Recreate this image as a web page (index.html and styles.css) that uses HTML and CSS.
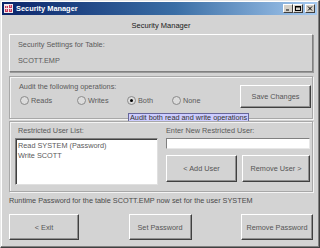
FILE: index.html
```html
<!DOCTYPE html>
<html>
<head>
<meta charset="utf-8">
<link rel="stylesheet" href="styles.css">
</head>
<body>
<div class="window">
  <div class="titlebar">
    <div class="appicon"><svg width="9" height="9" viewBox="0 0 9 9"><rect x="0" y="0" width="9" height="9" fill="#f4e8ee"/><path d="M1 2h3v2H1zM5 1h3v3H5zM1 5h3v3H1zM5 5h3v3H5z" fill="#c8385a"/><path d="M2 3h1M6 2h1M2 6h1M6 6h1" stroke="#fff" stroke-width="1"/></svg></div>
    <span class="title">Security Manager</span>
    <div class="winbtns">
      <span class="wb"><svg width="8" height="7" viewBox="0 0 8 7"><path d="M2 5h3" stroke="#000"/></svg></span>
      <span class="wb"><svg width="8" height="7" viewBox="0 0 8 7"><rect x="1.5" y="1.5" width="5" height="4" fill="none" stroke="#000"/><path d="M1.5 2h5" stroke="#000"/></svg></span>
      <span class="wb close"><svg width="8" height="7" viewBox="0 0 8 7"><path d="M2 1.5l4 4M6 1.5l-4 4" stroke="#000"/></svg></span>
    </div>
  </div>
  <div class="main">
    <div class="heading">Security Manager</div>
    <div class="panel raised p1">
      <div class="lbl">Security Settings for Table:</div>
      <div class="lbl tbl">SCOTT.EMP</div>
    </div>
    <div class="panel etched p2">
      <div class="audit">
        <div class="lbl">Audit the following operations:</div>
        <div class="radios">
          <span class="radio w1"><span class="circle"></span>Reads</span>
          <span class="radio w2"><span class="circle"></span>Writes</span>
          <span class="radio w3"><span class="circle on"></span>Both</span>
          <span class="radio"><span class="circle"></span>None</span>
        </div>
      </div>
      <div class="btn save">Save Changes</div>
      <div class="tooltip">Audit both read and write operations</div>
    </div>
    <div class="panel etched p3">
      <div class="col">
        <div class="lbl sub">Restricted User List:</div>
        <div class="list">
          <div>Read SYSTEM (Password)</div>
          <div>Write SCOTT</div>
        </div>
      </div>
      <div class="col">
        <div class="lbl">Enter New Restricted User:</div>
        <div class="field"></div>
        <div class="btnrow">
          <div class="btn ub">&lt; Add User</div>
          <div class="btn ub">Remove User &gt;</div>
        </div>
      </div>
    </div>
    <div class="status">Runtime Password for the table SCOTT.EMP now set for the user SYSTEM</div>
    <div class="bottom">
      <div class="btn b1">&lt; Exit</div>
      <div class="btn b2">Set Password</div>
      <div class="btn b3">Remove Password</div>
    </div>
  </div>
</div>
</body>
</html>
```

FILE: styles.css
```css
html, body { margin: 0; padding: 0; }
body { width: 320px; height: 248px; overflow: hidden; background: #d3d3d3; font-family: "Liberation Sans", Arial, sans-serif; }
.window {
  width: 320px; height: 248px; box-sizing: border-box;
  background: #d3d3d3;
  border-top: 1px solid #e8e8e8; border-left: 1px solid #e8e8e8;
  border-right: 1px solid #404040; border-bottom: 1px solid #404040;
  box-shadow: inset -1px -1px 0 #808080, inset 1px 1px 0 #fff;
  padding: 1px 2px 0 1px;
  display: flex; flex-direction: column;
}
.titlebar {
  height: 13px; display: flex; align-items: center;
  background: linear-gradient(to right, #0a246a 0%, #3a6ea5 55%, #a6caf0 100%);
  padding: 0 2px 0 2px;
}
.appicon { width: 9px; height: 9px; display: flex; }
.title { color: #fff; font-weight: bold; font-size: 7.4px; margin-left: 3px; flex: 1; }
.winbtns { display: flex; gap: 0; }
.wb {
  width: 8px; height: 7px; background: #d4d0c8; display: flex;
  border-top: 1px solid #fff; border-left: 1px solid #fff;
  border-right: 1px solid #404040; border-bottom: 1px solid #404040;
}
.wb.close { margin-left: 2px; }
.main { padding: 0 4px 0 7px; display: flex; flex-direction: column; flex: 1; }
.heading { height: 19px; text-align: center; font-size: 7.5px; color: #202020; line-height: 8px; padding-top: 7px; box-sizing: border-box; }
.lbl { font-size: 7.3px; color: #5a5a5a; line-height: 9px; }
.panel { box-sizing: border-box; position: relative; }
.raised {
  border-top: 1px solid #fff; border-left: 1px solid #fff;
  border-right: 1px solid #808080; border-bottom: 1px solid #808080;
  box-shadow: 1px 1px 0 #9a9a9a;
}
.etched {
  border: 1px solid #a8a8a8;
  box-shadow: inset 1px 1px 0 #f4f4f4, 1px 1px 0 #f4f4f4;
}
.p1 { height: 38px; padding: 5px 0 0 8px; }
.p1 .tbl { margin-top: 7px; }
.p2 { height: 43px; margin-top: 4px; display: flex; padding: 5px 1px 0 9px; }
.audit { flex: 1; }
.radios { display: flex; margin-top: 5px; margin-left: 1px; }
.radio { display: flex; align-items: center; font-size: 7.3px; color: #5a5a5a; line-height: 9px; }
.w1 { width: 57px; }
.w2 { width: 50px; }
.w3 { width: 45px; }
.circle {
  width: 7px; height: 7px; border-radius: 50%; border: 1px solid #8a8a8a;
  background: #dcdcdc; margin-right: 2px; position: relative; box-sizing: content-box;
}
.circle.on::after { content: ""; position: absolute; left: 2px; top: 2px; width: 3px; height: 3px; border-radius: 50%; background: #000; }
.btn {
  box-sizing: border-box; display: flex; align-items: center; justify-content: center;
  font-size: 7.3px; color: #555; background: #d3d3d3;
  border-top: 1px solid #fff; border-left: 1px solid #fff;
  border-right: 1px solid #404040; border-bottom: 1px solid #404040;
  box-shadow: inset -1px -1px 0 #909090;
}
.save { width: 71px; height: 23px; margin-top: 3px; }
.tooltip {
  position: absolute; left: 118px; top: 36px;
  background: #ccccff; border: 1px solid #66669a; color: #333;
  font-size: 7.3px; line-height: 7px; padding: 0 1px; white-space: nowrap;
}
.p3 { height: 71px; margin-top: 2px; display: flex; gap: 8px; padding: 4px 2px 0 5px; }
.col { display: flex; flex-direction: column; }
.p3 .col:first-child { width: 143px; }
.p3 .col:last-child { flex: 1; }
.sub { padding-left: 3px; }
.list {
  margin-top: 3px; height: 47px; box-sizing: border-box; background: #fff;
  border-top: 1px solid #808080; border-left: 1px solid #808080;
  border-right: 1px solid #e0e0e0; border-bottom: 1px solid #e0e0e0;
  box-shadow: inset 1px 1px 0 #404040;
  padding: 2px 0 0 2px; font-size: 7.3px; color: #5a5a5a; line-height: 10px;
}
.field {
  margin-top: 3px; height: 11px; box-sizing: border-box; background: #fff;
  border-top: 1px solid #808080; border-left: 1px solid #808080;
  border-right: 1px solid #e8e8e8; border-bottom: 1px solid #e8e8e8;
}
.btnrow { display: flex; justify-content: space-between; margin-top: 6px; }
.ub { width: 71px; height: 27px; }
.ub:last-child { width: 68px; }
.status { height: 22px; font-size: 7.3px; color: #4a4a4a; line-height: 9px; padding-top: 4px; box-sizing: border-box; }
.bottom { display: flex; justify-content: space-between; }
.b1 { width: 70px; height: 26px; }
.b2 { width: 63px; height: 26px; }
.b3 { width: 72px; height: 26px; }
```
